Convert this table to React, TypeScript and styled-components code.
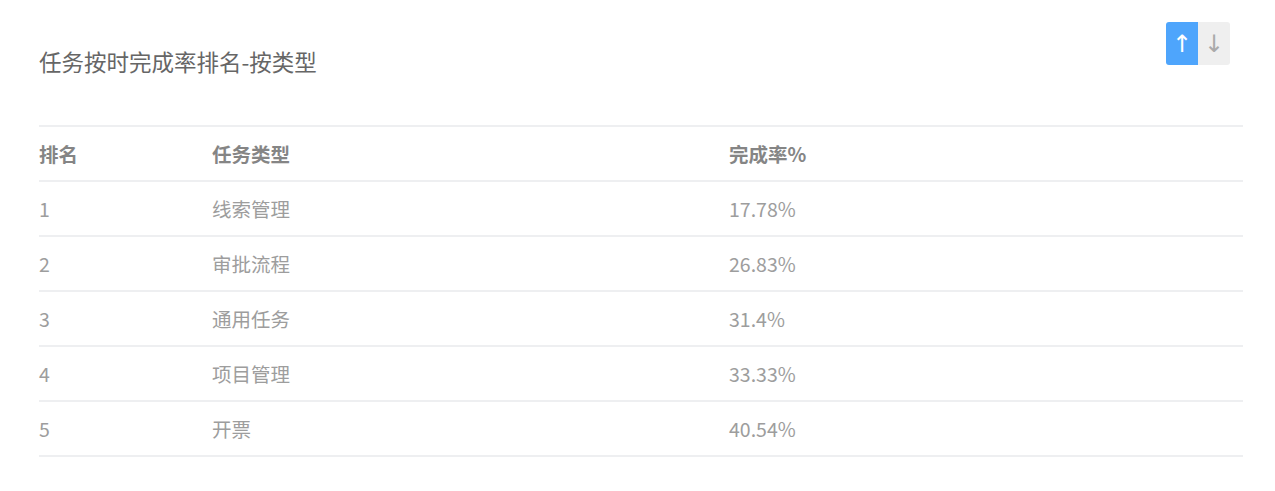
import React from "react";
import styled, { createGlobalStyle } from "styled-components";

const Global = createGlobalStyle`
  html, body { margin: 0; padding: 0; background: #fff; }
  body { font-family: "Microsoft YaHei", "Noto Sans CJK SC", "Liberation Sans", sans-serif; }
`;

const Page = styled.div`
  padding: 22px 32px 0 39px;
  width: 1275px;
  box-sizing: border-box;
`;

const Header = styled.div`
  display: flex;
  justify-content: space-between;
  align-items: flex-start;
  padding-right: 13px;
`;

const Title = styled.h2`
  margin: 23px 0 0 0;
  font-size: 22.5px;
  font-weight: 400;
  color: #666;
  line-height: 32px;
`;

const SortGroup = styled.div`
  display: flex;
`;

const SortButton = styled.button<{ $active?: boolean; $side: "left" | "right" }>`
  width: 32px;
  height: 43px;
  border: none;
  padding: 0;
  margin: 0;
  display: flex;
  align-items: center;
  justify-content: center;
  font-size: 24px;
  font-family: "DejaVu Sans", sans-serif;
  background: ${(p) => (p.$active ? "#4ea5fc" : "#efefef")};
  color: ${(p) => (p.$active ? "#fff" : "#aaa")};
  border-radius: ${(p) => (p.$side === "left" ? "3px 0 0 3px" : "0 3px 3px 0")};
`;

const Table = styled.div`
  margin-top: 48px;
  width: 1204px;
  border-top: 2px solid #eeeff1;
`;

const Row = styled.div<{ $head?: boolean }>`
  display: grid;
  grid-template-columns: 173px 517px 1fr;
  height: 53px;
  align-items: center;
  border-bottom: 2px solid #eeeff1;
  font-size: 19.5px;
  color: ${(p) => (p.$head ? "#858585" : "#9d9d9d")};
  font-weight: ${(p) => (p.$head ? 700 : 400)};
`;

const Cell = styled.div``;

const data = [
  ["1", "线索管理", "17.78%"],
  ["2", "审批流程", "26.83%"],
  ["3", "通用任务", "31.4%"],
  ["4", "项目管理", "33.33%"],
  ["5", "开票", "40.54%"],
];

export default function App() {
  return (
    <Page>
      <Global />
      <Header>
        <Title>任务按时完成率排名-按类型</Title>
        <SortGroup>
          <SortButton $active $side="left">↑</SortButton>
          <SortButton $side="right">↓</SortButton>
        </SortGroup>
      </Header>
      <Table>
        <Row $head>
          <Cell>排名</Cell>
          <Cell>任务类型</Cell>
          <Cell>完成率%</Cell>
        </Row>
        {data.map((r) => (
          <Row key={r[0]}>
            <Cell>{r[0]}</Cell>
            <Cell>{r[1]}</Cell>
            <Cell>{r[2]}</Cell>
          </Row>
        ))}
      </Table>
    </Page>
  );
}
